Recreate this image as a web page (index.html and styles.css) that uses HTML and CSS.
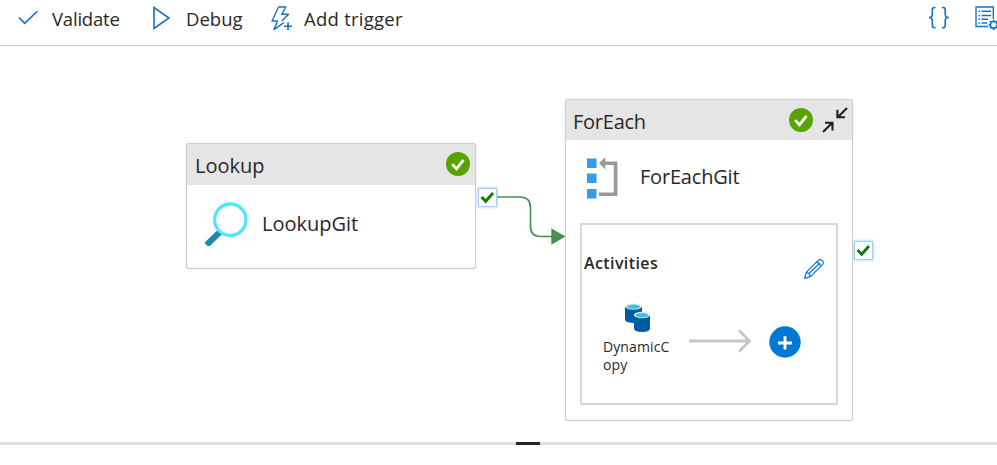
FILE: index.html
```html
<!DOCTYPE html>
<html lang="en">
<head>
<meta charset="utf-8">
<title>Pipeline</title>
<link rel="stylesheet" href="styles.css">
</head>
<body>
<header class="toolbar">
  <div class="tool validate">
    <svg width="20" height="14" viewBox="0 0 20 14" fill="none" stroke="#1474c4" stroke-width="1.6"><path d="M1 6.5 6.7 12.3 19.3 .2"/></svg>
    <span>Validate</span>
  </div>
  <div class="tool debug">
    <svg width="18" height="24" viewBox="0 0 18 24" fill="none" stroke="#1474c4" stroke-width="1.6"><path d="M2 1.6V22.4L17 12Z"/></svg>
    <span>Debug</span>
  </div>
  <div class="tool trigger">
    <svg width="22" height="25" viewBox="0 0 22 25" fill="none" stroke="#1474c4" stroke-width="1.4" stroke-linejoin="round"><path d="M13 16.5 3 23.6 6.5 15H1L7.5 1H14.8L10.7 8.3H17.5L11 15"/><path d="M17 16.3V24M13 20.2H21" stroke-width="1.6"/></svg>
    <span>Add trigger</span>
  </div>
  <svg class="code" width="22" height="24" viewBox="0 0 22 24" fill="none" stroke="#1474c4" stroke-width="1.6"><path d="M7.5 1.5H6.3Q4.3 1.5 4.3 4V8.5Q4.3 11.5 1 11.5 4.3 11.5 4.3 14.5V19Q4.3 21.8 6.3 21.8H7.5M14 1.5H15.2Q17.2 1.5 17.2 4V8.5Q17.2 11.5 20.8 11.5 17.2 11.5 17.2 14.5V19Q17.2 21.8 15.2 21.8H14"/></svg>
  <svg class="props" width="22" height="24" viewBox="0 0 22 24" fill="none" stroke="#1474c4" stroke-width="1.4"><path d="M13 20.5H1V1H18.3V13"/><path d="M3.5 5.2H5M6.5 5.2H16M3.5 9.5H5M6.5 9.5H16M3.5 13.3H5M6.5 13.3H13M3.5 17H5M6.5 17H12"/><circle cx="18.7" cy="18.8" r="3.3" stroke-width="1.6"/><path d="M18.7 13.8V15.6M18.7 22V24M13.6 18.8H15.5M15 15.2 16.5 16.6M15 22.4 16.5 21M22 15.6 21 16.5M22 22 21 21" stroke-width="1.8"/></svg>
</header>

<main class="canvas">
  <svg class="link" width="74" height="52" viewBox="0 0 74 52"><path d="M0 6H24Q34.5 6 34.5 17V35Q34.5 45.5 44 45.5H58" fill="none" stroke="#46904f" stroke-width="1.6"/><path d="M55.3 37.3 69.5 45.5 55.3 53.7Z" fill="#46904f"/></svg>

  <section class="node lookup">
    <div class="head">
      <span class="kind">Lookup</span>
      <svg width="24" height="24" viewBox="0 0 24 24"><circle cx="12" cy="12" r="12" fill="#57a300"/><path d="m6.2 12.1 4.3 4.8 7-9" fill="none" stroke="#fff" stroke-width="2.8"/></svg>
    </div>
    <div class="body">
      <svg width="43" height="44" viewBox="0 0 43 44"><path d="M16 29 1.5 43" stroke="#1b87b5" stroke-width="6"/><circle cx="25.3" cy="17.7" r="15.7" fill="#fff" stroke="#50e6ff" stroke-width="3.3"/></svg>
      <span class="name">LookupGit</span>
    </div>
  </section>

  <section class="node foreach">
    <div class="head">
      <span class="kind">ForEach</span>
      <svg width="24" height="24" viewBox="0 0 24 24"><circle cx="12" cy="12" r="12" fill="#57a300"/><path d="m6.2 12.1 4.3 4.8 7-9" fill="none" stroke="#fff" stroke-width="2.8"/></svg>
      <svg class="collapse" width="26" height="26" viewBox="0 0 26 26" fill="none" stroke="#201f1e" stroke-width="2.1"><path d="M25 1 16 10M15.4 2.8V10.3H23M1 25 10 16M3 15.7H10.5V23.5"/></svg>
    </div>
    <div class="body">
      <svg width="31" height="42" viewBox="0 0 31 42"><path d="M0 1.5H9.5V11H0ZM0 16.5H9.5V26H0ZM0 32H9.5V41.5H0Z" fill="#379be6"/><path d="M16 6.3H28.6V37.2H12" fill="none" stroke="#999" stroke-width="3.6"/><path d="M12 6.3 18.3 0V12.6Z" fill="#999"/></svg>
      <span class="name">ForEachGit</span>
    </div>
    <div class="activities">
      <div class="caption">
        <strong>Activities</strong>
        <svg width="20" height="20" viewBox="0 0 20 20" fill="none" stroke="#0078d4" stroke-width="1.2" stroke-linejoin="round"><path d="M.7 19.3 2.2 13.4 14 1.6Q15.3.3 17 .8 19.2 1.5 19.3 3.5 19.3 4.8 18.4 5.8L6.5 17.7ZM2.2 13.4 5 14.5 6.5 17.7M5 14.5 16.2 3.6M12.8 2.8 17.2 7"/></svg>
      </div>
      <div class="flow">
        <div class="activity">
          <svg width="26" height="29" viewBox="0 0 26 29"><path d="M0 3.5V17.3Q2 20 9 20H17V3.5Z" fill="#005ba1"/><ellipse cx="8.5" cy="3.5" rx="8.3" ry="3.1" fill="#e8e8e8"/><ellipse cx="8.5" cy="3.7" rx="6.6" ry="2.1" fill="#32c5e8"/><path d="M9 12V26Q10 29 17 29T25 26V12Z" fill="#005ba1"/><ellipse cx="17" cy="12" rx="8.2" ry="3.2" fill="#e8e8e8"/><ellipse cx="17" cy="12.2" rx="6.5" ry="2.2" fill="#32c5e8"/></svg>
          <span class="label">DynamicCopy</span>
        </div>
        <svg class="arrow" width="62" height="24" viewBox="0 0 62 24" fill="none" stroke="#c8c6c4" stroke-width="2.8"><path d="M0 12H60M50 1.5 60.5 12 50 22.5"/></svg>
        <svg class="add" width="32" height="32" viewBox="0 0 32 32"><circle cx="16" cy="16" r="15.7" fill="#0078d4"/><path d="M9 17H23M16 10.2V23.5" stroke="#fff" stroke-width="2.8"/></svg>
      </div>
    </div>
  </section>

  <span class="port port-lookup"><svg width="15" height="13" viewBox="0 0 15 13"><path d="m1.5 6 4.2 4.3L13 2" fill="none" stroke="#107c10" stroke-width="2.9"/></svg></span>
  <span class="port port-foreach"><svg width="15" height="13" viewBox="0 0 15 13"><path d="m1.5 6 4.2 4.3L13 2" fill="none" stroke="#107c10" stroke-width="2.9"/></svg></span>
</main>
<div class="splitter"><div class="grip"></div></div>
</body>
</html>
```
FILE: styles.css
```css
* { box-sizing: border-box; }
body {
  margin: 0;
  height: 465px;
  overflow: hidden;
  background: #fff;
  color: #292827;
  font-family: "Open Sans", "Noto Sans", sans-serif;
  display: flex;
  flex-direction: column;
}
svg { display: block; flex: none; }
span, strong { white-space: nowrap; }

.toolbar {
  height: 46px;
  flex: none;
  display: flex;
  align-items: center;
  padding: 0 0 9px 18px;
  border-bottom: 1px solid #c8c8c8;
  font-size: 18.5px;
}
.tool { display: flex; align-items: center; line-height: 26px; }
.tool span { position: relative; top: 1px; }
.validate { width: 134px; gap: 14px; letter-spacing: -.2px; }
.debug { width: 119px; gap: 16px; }
.trigger { gap: 11px; letter-spacing: .25px; }
.code { margin-left: auto; }
.props { margin-left: 25px; }

.canvas { position: relative; height: 396px; flex: none; }
.node {
  position: absolute;
  background: #fff;
  border: 1px solid #cecece;
  border-radius: 3px;
  box-shadow: 0 0 1px #bbb;
}
.lookup { left: 186px; top: 97px; width: 290px; height: 126px; }
.foreach { left: 565px; top: 53px; width: 288px; height: 322px; }
.head {
  height: 41px;
  display: flex;
  align-items: center;
  padding: 0 5px 1px 8px;
  background: #e5e5e5;
  border-radius: 2px 2px 0 0;
  font-size: 20px;
}
.kind { margin-right: auto; position: relative; top: 1px; }
.collapse { margin-left: 9px; }
.foreach .head { height: 40px; padding: 0 4px 0 7px; letter-spacing: -.25px; }
.body { display: flex; align-items: center; font-size: 20px; }
.lookup .body { height: 77px; padding-left: 18px; gap: 14px; }
.foreach .body { height: 76px; padding-left: 21px; gap: 22px; letter-spacing: -.2px; }
.foreach .name { position: relative; top: -2px; }

.activities {
  width: 258px;
  height: 182px;
  margin: 7px 0 0 14px;
  border: 2px solid #d8d8d8;
}
.caption {
  display: flex;
  align-items: center;
  justify-content: space-between;
  height: 40px;
  margin-top: 18px;
  padding: 0 12px 0 2px;
  font-size: 16px;
  letter-spacing: .4px;
}
.caption strong { font-weight: 600; }
.caption svg { margin-top: 12px; }
.flow { display: flex; padding: 20px 0 0 21px; }
.activity { width: 70px; }
.activity svg { margin-left: 22px; }
.label {
  display: block;
  margin-top: 6px;
  white-space: normal;
  word-break: break-all;
  font-size: 14px;
  line-height: 18px;
  letter-spacing: .1px;
}
.arrow { margin: 26px 0 0 16px; }
.add { margin: 23px 0 0 18px; }

.link { position: absolute; left: 496px; top: 145px; overflow: visible; }
.port {
  position: absolute;
  width: 19px;
  height: 19px;
  display: flex;
  align-items: center;
  justify-content: center;
  background: #fff;
  border: 1px solid #a6cdf0;
  box-shadow: 0 0 3px #9bcbf5;
}
.port-lookup { left: 478px; top: 142px; }
.port-foreach { left: 854px; top: 195px; }

.splitter { height: 3px; flex: none; background: #dedede; }
.grip { width: 24px; height: 3px; margin-left: 516px; background: #252525; }
```
